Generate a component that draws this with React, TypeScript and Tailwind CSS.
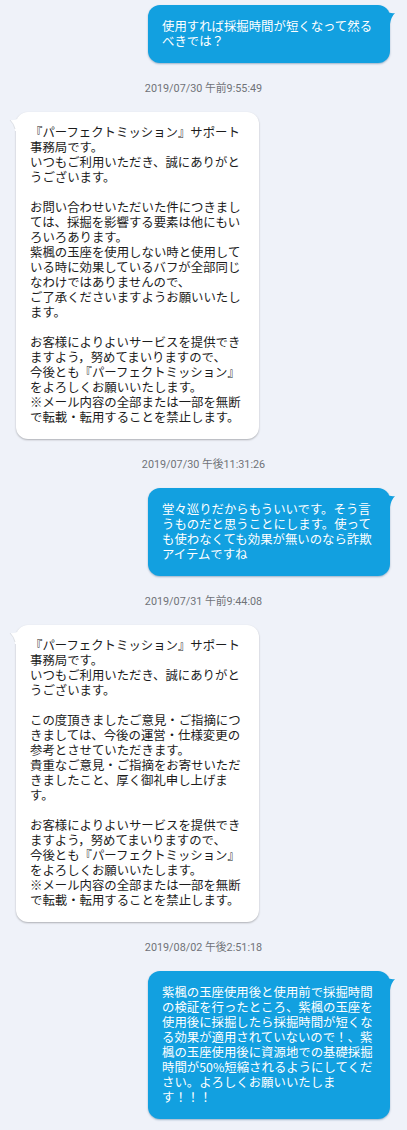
import React from 'react';

type Msg =
  | { kind: 'out'; text: string }
  | { kind: 'in'; text: string }
  | { kind: 'time'; text: string };

const reply1 = `『パーフェクトミッション』サポート
事務局です。
いつもご利用いただき、誠にありがと
うございます。

お問い合わせいただいた件につきまし
ては、採掘を影響する要素は他にもい
ろいろあります。
紫楓の玉座を使用しない時と使用して
いる時に効果しているバフが全部同じ
なわけではありませんので、
ご了承くださいますようお願いいたし
ます。

お客様によりよいサービスを提供でき
ますよう，努めてまいりますので、
今後とも『パーフェクトミッション』
をよろしくお願いいたします。
※メール内容の全部または一部を無断
で転載・転用することを禁止します。`;

const reply2 = `『パーフェクトミッション』サポート
事務局です。
いつもご利用いただき、誠にありがと
うございます。

この度頂きましたご意見・ご指摘につ
きましては、今後の運営・仕様変更の
参考とさせていただきます。
貴重なご意見・ご指摘をお寄せいただ
きましたこと、厚く御礼申し上げま
す。

お客様によりよいサービスを提供でき
ますよう，努めてまいりますので、
今後とも『パーフェクトミッション』
をよろしくお願いいたします。
※メール内容の全部または一部を無断
で転載・転用することを禁止します。`;

const messages: Msg[] = [
  { kind: 'out', text: '使用すれば採掘時間が短くなって然る\nべきでは？' },
  { kind: 'time', text: '2019/07/30 午前9:55:49' },
  { kind: 'in', text: reply1 },
  { kind: 'time', text: '2019/07/30 午後11:31:26' },
  {
    kind: 'out',
    text: '堂々巡りだからもういいです。そう言\nうものだと思うことにします。使って\nも使わなくても効果が無いのなら詐欺\nアイテムですね',
  },
  { kind: 'time', text: '2019/07/31 午前9:44:08' },
  { kind: 'in', text: reply2 },
  { kind: 'time', text: '2019/08/02 午後2:51:18' },
  {
    kind: 'out',
    text: '紫楓の玉座使用後と使用前で採掘時間\nの検証を行ったところ、紫楓の玉座を\n使用後に採掘したら採掘時間が短くな\nる効果が適用されていないので！、紫\n楓の玉座使用後に資源地での基礎採掘\n時間が50%短縮されるようにしてくだ\nさい。よろしくお願いいたしま\nす！！！',
  },
];

const font = { fontFamily: '"Noto Sans CJK JP", "Noto Sans", sans-serif' };

function OutBubble({ text }: { text: string }) {
  return (
    <div className="flex justify-end pr-[17px]">
      <div className="relative w-[242px] rounded-[12px] bg-[#12a0e0] pl-[14px] pr-[10px] pt-[14px] pb-[14px] text-[12.4px] leading-[15px] text-white whitespace-pre-line shadow-[0_1px_2px_rgba(0,60,110,0.35)]">
        <svg
          className="absolute -right-[6px] top-[4px]"
          width="10"
          height="16"
          viewBox="0 0 10 16"
        >
          <path d="M0 2 Q5 5 9 4 Q5 8 4 15 L0 15 Z" fill="#12a0e0" />
        </svg>
        {text}
      </div>
    </div>
  );
}

function InBubble({ text }: { text: string }) {
  return (
    <div className="flex justify-start pl-[16px]">
      <div className="relative w-[243px] rounded-[12px] bg-white pl-[14px] pr-[10px] pt-[13px] pb-[14px] text-[12.4px] leading-[15px] text-[#1c1c1c] whitespace-pre-line shadow-[0_1px_2px_rgba(0,0,0,0.28)]">
        <svg
          className="absolute -left-[7px] top-[4px]"
          width="10"
          height="16"
          viewBox="0 0 10 16"
        >
          <path d="M10 2 Q5 5 1 4 Q5 8 6 15 L10 15 Z" fill="#ffffff" />
          <path d="M1 4 Q5 8 6 13" fill="none" stroke="#d4d8de" strokeWidth="0.8" />
        </svg>
        {text}
      </div>
    </div>
  );
}

export default function App() {
  return (
    <div className="min-h-[1130px] w-full bg-[#eff2f9] pt-[5px] pb-[12px]" style={font}>
      {messages.map((m, i) =>
        m.kind === 'time' ? (
          <div
            key={i}
            className="mt-[20px] mb-[17px] text-center text-[10.8px] leading-[12px] text-[#707378]"
            style={{ fontFamily: 'Roboto, "Noto Sans CJK JP", sans-serif' }}
          >
            {m.text}
          </div>
        ) : m.kind === 'out' ? (
          <OutBubble key={i} text={m.text} />
        ) : (
          <InBubble key={i} text={m.text} />
        )
      )}
    </div>
  );
}
